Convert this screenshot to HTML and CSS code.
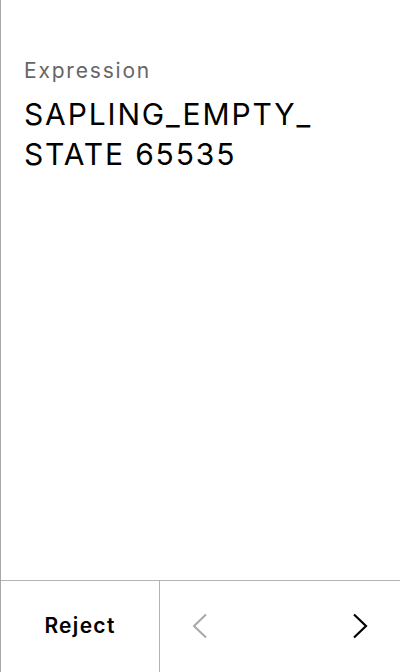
FILE: index.html
```html
<!DOCTYPE html>
<html>
<head>
<meta charset="utf-8">
<link rel="stylesheet" href="styles.css">
</head>
<body>
<div class="screen">
  <div class="content">
    <div class="label">Expression</div>
    <div class="value">SAPLING_EMPTY_<br>STATE 65535</div>
  </div>
  <div class="actions">
    <button class="reject">Reject</button>
    <div class="nav">
      <button class="nav-btn prev" aria-label="Previous">
        <svg width="16" height="26" viewBox="0 0 16 26"><polyline points="14,1.5 2,13 14,24.5" fill="none" stroke="currentColor" stroke-width="2"/></svg>
      </button>
      <button class="nav-btn next" aria-label="Next">
        <svg width="16" height="26" viewBox="0 0 16 26"><polyline points="2,1.5 14,13 2,24.5" fill="none" stroke="currentColor" stroke-width="2.2"/></svg>
      </button>
    </div>
  </div>
</div>
</body>
</html>
```
FILE: styles.css
```css
* { box-sizing: border-box; }
html, body { margin: 0; padding: 0; background: #fff; }
body { font-family: Inter, "Noto Sans", sans-serif; color: #000; }
.screen {
  width: 400px;
  height: 672px;
  border-left: 1px solid #a8a8a8;
  display: flex;
  flex-direction: column;
}
.content {
  flex: 1;
  padding: 57px 20px 0 23px;
}
.label {
  font-size: 21px;
  line-height: 28px;
  letter-spacing: 1.8px;
  color: #666;
}
.value {
  margin-top: 9px;
  font-size: 30px;
  line-height: 40px;
  letter-spacing: 1.85px;
  font-weight: 400;
  color: #000;
}
.actions {
  height: 92px;
  border-top: 1px solid #b4b4b4;
  display: flex;
}
button {
  font-family: inherit;
  background: none;
  border: 0;
  padding: 0;
  cursor: pointer;
}
.reject {
  width: 159px;
  padding-bottom: 3px;
  border-right: 1px solid #b4b4b4;
  font-size: 21px;
  font-weight: 600;
  letter-spacing: 1.3px;
  color: #000;
}
.nav {
  flex: 1;
  display: flex;
  justify-content: space-between;
}
.nav-btn {
  width: 80px;
  padding-bottom: 2px;
  display: flex;
  align-items: center;
  justify-content: center;
}
.prev { color: #a8a8a8; }
.next { color: #000; }
```
